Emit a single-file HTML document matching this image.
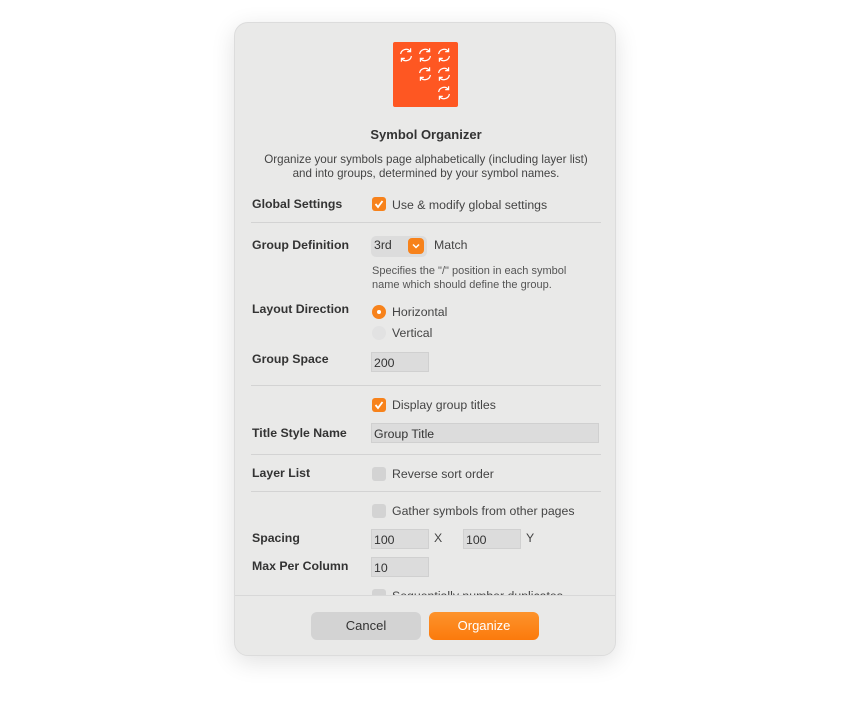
<!DOCTYPE html>
<html><head><meta charset="utf-8"><style>
*{margin:0;padding:0;box-sizing:border-box}
body{width:850px;height:702px;background:#fff;font-family:"Liberation Sans",sans-serif;position:relative;overflow:hidden;color:#333}
.dlg{position:absolute;left:234px;top:22px;width:382px;height:634px;background:#e9e9e8;border-radius:14px;border:1px solid #dcdcdc;box-shadow:0 6px 24px rgba(0,0,0,.12);overflow:hidden}
.a{position:absolute;white-space:nowrap}
.lbl{font-weight:bold;font-size:12.3px;color:#333;left:17px}
.t{font-size:12.3px;color:#444}
.sep{position:absolute;left:16px;width:350px;height:1px;background:#d3d3d3}
.cb{position:absolute;width:14px;height:14px;border-radius:3px;background:#d3d3d3}
.cb.on{background:#f7821b}
.fld{position:absolute;height:20px;background:#dcdcdc;border:1px solid #d0d0d0;font-size:12.3px;padding:3px 0 0 2px;color:#333}
.btn{position:absolute;top:589px;width:110px;height:28px;border-radius:6px;font-size:13px;text-align:center;line-height:28px}
</style></head><body>
<div class="dlg">
<div class="a" style="left:158px;top:19px;width:65px;height:65px;background:#fe5722;border-radius:2px">
<svg width="65" height="65" viewBox="0 0 65 65" fill="none" stroke="#fff" stroke-width="1.2">
<g id="r"><path d="M7.6 12A5.5 5.5 0 0 1 17.2 9.2"/><path d="M17.6 6.2v3.4h-3.4"/><path d="M18.4 14A5.5 5.5 0 0 1 8.8 16.8"/><path d="M8.4 19.8v-3.4h3.4"/></g>
<use href="#r" x="19"/><use href="#r" x="38"/><use href="#r" x="19" y="19"/><use href="#r" x="38" y="19"/><use href="#r" x="38" y="38"/>
</svg></div>
<div class="a" style="left:0;width:382px;text-align:center;top:104px;font-weight:bold;font-size:13px;color:#333">Symbol Organizer</div>
<div class="a" style="left:0;width:382px;text-align:center;top:130px;font-size:11.6px;line-height:14px;color:#444;white-space:normal">Organize your symbols page alphabetically (including layer list)<br>and into groups, determined by your symbol names.</div>

<div class="a lbl" style="top:174px">Global Settings</div>
<div class="cb on" style="left:137px;top:174px"></div><svg class="a" style="left:139px;top:176px" width="10" height="10"><path d="M1.5 5l2.5 3 4.5-6" stroke="#fff" stroke-width="1.8" fill="none"/></svg>
<div class="a t" style="left:157px;top:175px">Use &amp; modify global settings</div>
<div class="sep" style="top:199px"></div>

<div class="a lbl" style="top:215px">Group Definition</div>
<div class="a" style="left:136px;top:213px;width:56px;height:21px;background:#dcdcdc;border-radius:5px"></div>
<div class="a t" style="left:139px;top:215px;color:#333">3rd</div>
<div class="a" style="left:173px;top:215px;width:16px;height:16px;background:#f7821b;border-radius:4px"></div>
<svg class="a" style="left:176px;top:219px" width="10" height="8"><path d="M2 2.5l3 3 3-3" stroke="#fff" stroke-width="1.5" fill="none"/></svg>
<div class="a t" style="left:199px;top:215px">Match</div>
<div class="a" style="left:137px;top:241px;font-size:11px;line-height:14px;color:#555">Specifies the "/" position in each symbol<br>name which should define the group.</div>

<div class="a lbl" style="top:279px">Layout Direction</div>
<div class="a" style="left:137px;top:282px;width:14px;height:14px;border-radius:50%;background:#f7821b"></div>
<div class="a" style="left:142px;top:287px;width:4px;height:4px;border-radius:50%;background:#fff"></div>
<div class="a t" style="left:157px;top:282px">Horizontal</div>
<div class="a" style="left:137px;top:303px;width:14px;height:14px;border-radius:50%;background:#e2e2e2"></div>
<div class="a t" style="left:157px;top:303px">Vertical</div>

<div class="a lbl" style="top:329px">Group Space</div>
<div class="fld" style="left:136px;top:329px;width:58px">200</div>
<div class="sep" style="top:362px"></div>

<div class="cb on" style="left:137px;top:375px"></div><svg class="a" style="left:139px;top:377px" width="10" height="10"><path d="M1.5 5l2.5 3 4.5-6" stroke="#fff" stroke-width="1.8" fill="none"/></svg>
<div class="a t" style="left:157px;top:375px">Display group titles</div>
<div class="a lbl" style="top:403px">Title Style Name</div>
<div class="fld" style="left:136px;top:400px;width:228px">Group Title</div>
<div class="sep" style="top:431px"></div>

<div class="a lbl" style="top:443px">Layer List</div>
<div class="cb" style="left:137px;top:444px"></div>
<div class="a t" style="left:157px;top:444px">Reverse sort order</div>
<div class="sep" style="top:468px"></div>

<div class="cb" style="left:137px;top:481px"></div>
<div class="a t" style="left:157px;top:481px">Gather symbols from other pages</div>
<div class="a lbl" style="top:508px">Spacing</div>
<div class="fld" style="left:136px;top:506px;width:58px">100</div>
<div class="a t" style="left:199px;top:508px">X</div>
<div class="fld" style="left:228px;top:506px;width:58px">100</div>
<div class="a t" style="left:291px;top:508px">Y</div>
<div class="a lbl" style="top:536px">Max Per Column</div>
<div class="fld" style="left:136px;top:534px;width:58px">10</div>
<div class="cb" style="left:137px;top:566px"></div>
<div class="a t" style="left:157px;top:566px">Sequentially number duplicates</div>

<div class="a" style="left:0;top:572px;width:382px;height:70px;background:#e9e9e8;border-top:1px solid #d8d8d8"></div>
<div class="btn" style="left:76px;background:#d3d3d3;color:#333">Cancel</div>
<div class="btn" style="left:194px;background:linear-gradient(#fd932c,#fb7a0c);color:#fff">Organize</div>
</div>
</body></html>
